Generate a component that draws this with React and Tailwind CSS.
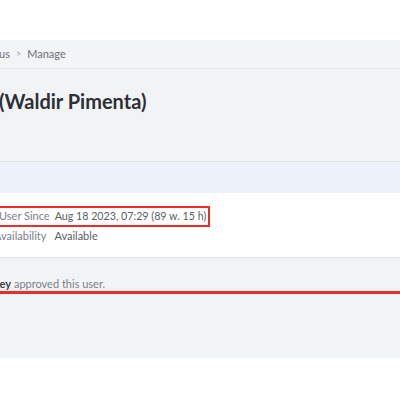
import React from 'react';

const App = () => {
    return (
        <div className="w-[400px] h-[400px] overflow-hidden bg-white font-['Lato','Liberation_Sans',sans-serif]">
            <div className="h-[40px] bg-white" />

            {/* Breadcrumbs */}
            <div className="h-[29px] bg-[#f3f4f6] border-b border-[#e2e4e8] flex items-center gap-[6px] text-[11px] text-[#6b7079] whitespace-nowrap">
                <span className="-ml-[1px]">us</span>
                <span className="text-[9px] text-[#9aa0a8]">&gt;</span>
                <span>Manage</span>
            </div>

            {/* Header */}
            <div className="h-[93px] bg-[#f2f3f5] border-b border-[#e2e4e8] pt-[19px]">
                <h1 className="text-[20px] font-bold text-[#2c3036] leading-[26px] -ml-[1px] whitespace-nowrap">(Waldir Pimenta)</h1>
            </div>

            <div className="h-[31px] bg-[#edf1fa]" />

            {/* Properties */}
            <div className="h-[65px] bg-white border-b border-[#e2e4e8] pt-[13px] text-[11px] whitespace-nowrap">
                <div className="w-[213px] h-[21px] border-2 border-[#ee2b2b] flex items-center gap-[5px] -ml-[3px]">
                    <span className="shrink-0 text-[#7b8089]">User Since</span>
                    <span className="shrink-0 text-[10.7px] text-[#595e66]">Aug 18 2023, 07:29 (89 w. 15 h)</span>
                </div>
                <div className="flex items-center gap-[8px] h-[18px] -ml-[6px]">
                    <span className="shrink-0 text-[#7b8089]">Availability</span>
                    <span className="shrink-0 text-[#595e66]">Available</span>
                </div>
            </div>

            {/* Timeline */}
            <div className="h-[100px] bg-[#f2f3f5] pt-[19px]">
                <p className="text-[11px] leading-[14px] text-[#7b8089] -ml-[6px] whitespace-nowrap">
                    <span className="font-bold text-[#3b3f45]">key</span> approved this user.
                </p>
                <div className="h-[3px] bg-[#ee2b2b]" />
            </div>

            <div className="h-[41px] bg-white" />
        </div>
    );
};

export default App;
